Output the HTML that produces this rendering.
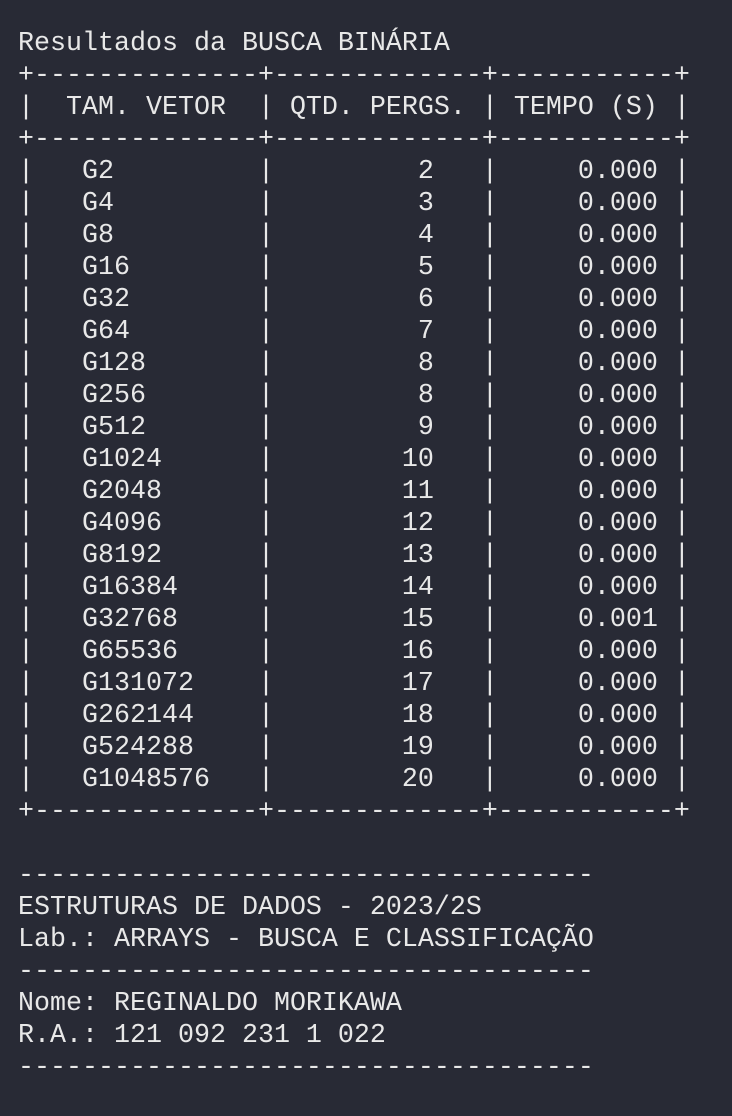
<!DOCTYPE html>
<html><head><meta charset="utf-8"><style>
html,body{margin:0;padding:0;background:#282a35;width:732px;height:1116px;overflow:hidden}
pre{margin:0;padding:28px 0 0 18px;font-family:"Liberation Mono",monospace;font-size:26.67px;line-height:32px;color:#e8e8e8;white-space:pre}
</style></head><body><pre>Resultados da BUSCA BINÁRIA
+--------------+-------------+-----------+
|  TAM. VETOR  | QTD. PERGS. | TEMPO (S) |
+--------------+-------------+-----------+
|   G2         |         2   |     0.000 |
|   G4         |         3   |     0.000 |
|   G8         |         4   |     0.000 |
|   G16        |         5   |     0.000 |
|   G32        |         6   |     0.000 |
|   G64        |         7   |     0.000 |
|   G128       |         8   |     0.000 |
|   G256       |         8   |     0.000 |
|   G512       |         9   |     0.000 |
|   G1024      |        10   |     0.000 |
|   G2048      |        11   |     0.000 |
|   G4096      |        12   |     0.000 |
|   G8192      |        13   |     0.000 |
|   G16384     |        14   |     0.000 |
|   G32768     |        15   |     0.001 |
|   G65536     |        16   |     0.000 |
|   G131072    |        17   |     0.000 |
|   G262144    |        18   |     0.000 |
|   G524288    |        19   |     0.000 |
|   G1048576   |        20   |     0.000 |
+--------------+-------------+-----------+

------------------------------------
ESTRUTURAS DE DADOS - 2023/2S
Lab.: ARRAYS - BUSCA E CLASSIFICAÇÃO
------------------------------------
Nome: REGINALDO MORIKAWA
R.A.: 121 092 231 1 022
------------------------------------</pre></body></html>
